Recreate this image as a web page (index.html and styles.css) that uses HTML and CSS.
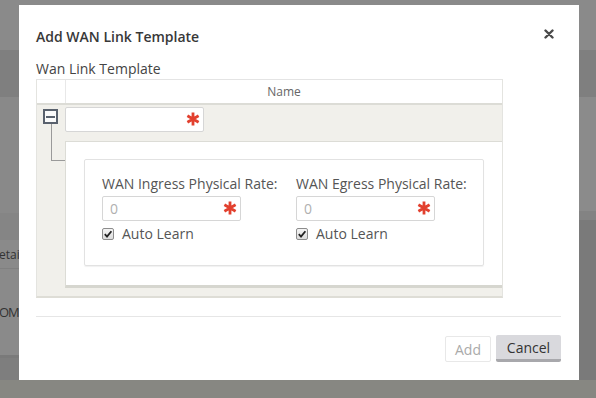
FILE: index.html
```html
<!DOCTYPE html>
<html lang="en">
<head>
  <meta charset="UTF-8">
  <title>Add WAN Link Template</title>
  <link rel="stylesheet" href="styles.css">
</head>
<body>
  <div class="page">
    <div class="topbar"></div>
    <div class="nav"></div>
    <div class="main">
      <div class="main-left">
        <div class="block"></div>
        <div class="strip"></div>
        <div class="thead"></div>
        <div class="trow"><span>etai</span></div>
        <div class="trow tall"><span>OM</span></div>
        <div class="tfoot"></div>
      </div>
      <div class="main-right">
        <div class="block"></div>
        <div class="strip"></div>
        <div class="rest"></div>
      </div>
    </div>
    <div class="bottom"></div>
  </div>

  <div class="modal">
    <div class="modal-head">
      <h3>Add WAN Link Template</h3>
      <span class="close">
        <svg width="10" height="10" viewBox="0 0 10 10"><path d="M1.5 1.5 L8.5 8.5 M8.5 1.5 L1.5 8.5" stroke="#4a4a4a" stroke-width="2.4" stroke-linecap="round"/></svg>
      </span>
    </div>

    <div class="modal-body">
      <div class="field-label">Wan Link Template</div>
      <div class="grid">
        <div class="grid-head">
          <div class="gh-toggle"></div>
          <div class="gh-name">Name</div>
        </div>
        <div class="grid-row">
          <div class="row-left">
            <span class="toggle"><span class="bar"></span></span>
            <div class="connector"></div>
          </div>
          <div class="row-right">
            <div class="input-wrap name-input">
              <input type="text">
              <svg class="req" width="14" height="14" viewBox="0 0 14 14"><path d="M7 0.5 V13.5 M1.4 3.8 L12.6 10.2 M12.6 3.8 L1.4 10.2" stroke="#e2402e" stroke-width="2.8"/></svg>
            </div>
            <div class="detail">
              <div class="card">
                <div class="col">
                  <div class="col-label">WAN Ingress Physical Rate:</div>
                  <div class="input-wrap rate-input">
                    <input type="text" placeholder="0">
                    <svg class="req" width="14" height="14" viewBox="0 0 14 14"><path d="M7 0.5 V13.5 M1.4 3.8 L12.6 10.2 M12.6 3.8 L1.4 10.2" stroke="#e2402e" stroke-width="2.8"/></svg>
                  </div>
                  <label class="check">
                    <span class="box"><svg width="10" height="10" viewBox="0 0 10 10"><path d="M1.8 5.2 L4 7.6 L8.4 2.2" fill="none" stroke="#222" stroke-width="1.8"/></svg></span>
                    Auto Learn
                  </label>
                </div>
                <div class="col">
                  <div class="col-label">WAN Egress Physical Rate:</div>
                  <div class="input-wrap rate-input">
                    <input type="text" placeholder="0">
                    <svg class="req" width="14" height="14" viewBox="0 0 14 14"><path d="M7 0.5 V13.5 M1.4 3.8 L12.6 10.2 M12.6 3.8 L1.4 10.2" stroke="#e2402e" stroke-width="2.8"/></svg>
                  </div>
                  <label class="check">
                    <span class="box"><svg width="10" height="10" viewBox="0 0 10 10"><path d="M1.8 5.2 L4 7.6 L8.4 2.2" fill="none" stroke="#222" stroke-width="1.8"/></svg></span>
                    Auto Learn
                  </label>
                </div>
              </div>
            </div>
          </div>
        </div>
      </div>
    </div>

    <div class="modal-foot">
      <button class="btn btn-add">Add</button>
      <button class="btn btn-cancel">Cancel</button>
    </div>
  </div>
</body>
</html>
```

FILE: styles.css
```css
body {
  margin: 0;
  width: 596px;
  height: 398px;
  overflow: hidden;
  font-family: "Open Sans", sans-serif;
  background: #878782;
  position: relative;
}

/* page behind the overlay */
.topbar {
  height: 50px;
  background: #8a8a8a;
}
.nav {
  height: 47px;
  background: #7f7f7f;
}
.main {
  display: flex;
  height: 283px;
}
.main-left {
  flex: 1;
  background: #898989;
}
.main-left .block {
  height: 116px;
}
.main-left .strip {
  height: 7px;
  background: #858585;
}
.main-left .thead {
  height: 20px;
  background: #858585;
}
.trow {
  height: 28px;
  display: flex;
  align-items: center;
  font-size: 12px;
  color: #333;
  background: #8a8a8a;
  border-bottom: 1px solid #808080;
}
.trow span {
  margin-left: -1px;
}
.trow.tall {
  height: 86px;
  border-bottom: 3px solid #7a7a7a;
}
.trow.tall span {
  font-size: 13px;
  letter-spacing: -1px;
}
.tfoot {
  height: 22px;
  background: #7e7e7e;
}
.main-right {
  width: 40px;
  background: #7a7a7a;
}
.main-right .block {
  height: 114px;
  background: #8b8b8b;
}
.main-right .strip {
  height: 9px;
  background: #838383;
}
.bottom {
  height: 18px;
  background: #878782;
}

/* modal */
.modal {
  position: absolute;
  left: 19px;
  top: 5px;
  width: 560px;
  height: 375px;
  background: #fff;
  box-sizing: border-box;
  padding: 0 18px 0 17px;
  display: flex;
  flex-direction: column;
}
.modal-head {
  display: flex;
  justify-content: space-between;
  align-items: center;
  padding-top: 22px;
}
.modal-head h3 {
  margin: 0;
  font-size: 14px;
  font-weight: 600;
  line-height: 20px;
  color: #383838;
}
.close {
  display: flex;
  margin-right: 7px;
  margin-top: -6px;
}
.field-label {
  margin-top: 12px;
  font-size: 14px;
  line-height: 20px;
  color: #444;
}

.grid {
  width: 467px;
  border-left: 1px solid #e4e4e0;
  border-right: 1px solid #e4e4e0;
  border-bottom: 2px solid #deddd6;
  box-sizing: border-box;
}
.grid-head {
  display: flex;
  height: 26px;
  box-sizing: border-box;
  border-top: 1px solid #e4e4e4;
  border-bottom: 2px solid #dcdcd6;
  background: #fff;
}
.gh-toggle {
  width: 28px;
  border-right: 1px solid #e8e8e8;
}
.gh-name {
  flex: 1;
  text-align: center;
  font-size: 12px;
  line-height: 23px;
  color: #666;
}

.grid-row {
  display: flex;
  background: #f1f0eb;
  padding-bottom: 8px;
}
.row-left {
  width: 28px;
  padding: 4px 0 0 6px;
  box-sizing: border-box;
}
.toggle {
  display: flex;
  align-items: center;
  justify-content: center;
  width: 15px;
  height: 15px;
  box-sizing: border-box;
  border: 2px solid #59616d;
  background: #fafafa;
}
.toggle .bar {
  width: 9px;
  height: 2px;
  background: #59616d;
}
.connector {
  margin-left: 8px;
  width: 14px;
  height: 36px;
  border-left: 1px solid #9a9a9a;
  border-bottom: 1px solid #9a9a9a;
}
.row-right {
  flex: 1;
  padding-top: 2px;
}

.input-wrap {
  position: relative;
  display: flex;
}
.input-wrap input {
  width: 100%;
  height: 25px;
  box-sizing: border-box;
  border: 1px solid #d6d6d6;
  border-radius: 2px;
  padding: 0 24px 0 7px;
  font-family: "Open Sans", sans-serif;
  font-size: 14px;
  color: #333;
  background: #fff;
  outline: none;
}
.input-wrap input::placeholder {
  color: #b0b0b0;
}
.req {
  position: absolute;
  right: 4px;
  top: 5px;
}
.name-input {
  width: 139px;
}
.rate-input {
  width: 139px;
  margin-top: 2px;
}

.detail {
  margin-top: 9px;
  background: #fff;
  border-top: 1px solid #dcdcd6;
  border-left: 1px solid #dcdcd6;
  border-bottom: 3px solid #d6d6cf;
  padding: 17px 18px 19px 18px;
}
.card {
  display: flex;
  width: 400px;
  box-sizing: border-box;
  border: 1px solid #e2e2e2;
  border-radius: 2px;
  box-shadow: 0 1px 1px rgba(0, 0, 0, 0.06);
  padding: 14px 0 21px 17px;
}
.col {
  flex: none;
  width: 194px;
}
.col-label {
  font-size: 14px;
  line-height: 20px;
  color: #555;
}
.check {
  display: flex;
  align-items: center;
  margin-top: 3px;
  font-size: 14px;
  line-height: 20px;
  color: #555;
}
.check .box {
  display: flex;
  align-items: center;
  justify-content: center;
  width: 12px;
  height: 12px;
  box-sizing: border-box;
  border: 1px solid #8c8c8c;
  border-radius: 2px;
  background: linear-gradient(#f4f4f4, #dcdcdc);
  margin-right: 8px;
}

.modal-foot {
  margin-top: 18px;
  border-top: 1px solid #e6e6e6;
  padding-top: 18px;
  display: flex;
  justify-content: flex-end;
  align-items: flex-end;
  gap: 5px;
}
.btn {
  font-family: "Open Sans", sans-serif;
  font-size: 14px;
  border-radius: 2px;
  padding: 0;
}
.btn-add {
  width: 46px;
  height: 26px;
  background: #fff;
  border: 1px solid #e8e8e8;
  color: #aaa;
}
.btn-cancel {
  width: 65px;
  height: 27px;
  background: #d9d9dd;
  border: none;
  border-bottom: 3px solid #a8a8ac;
  color: #333;
}
```
